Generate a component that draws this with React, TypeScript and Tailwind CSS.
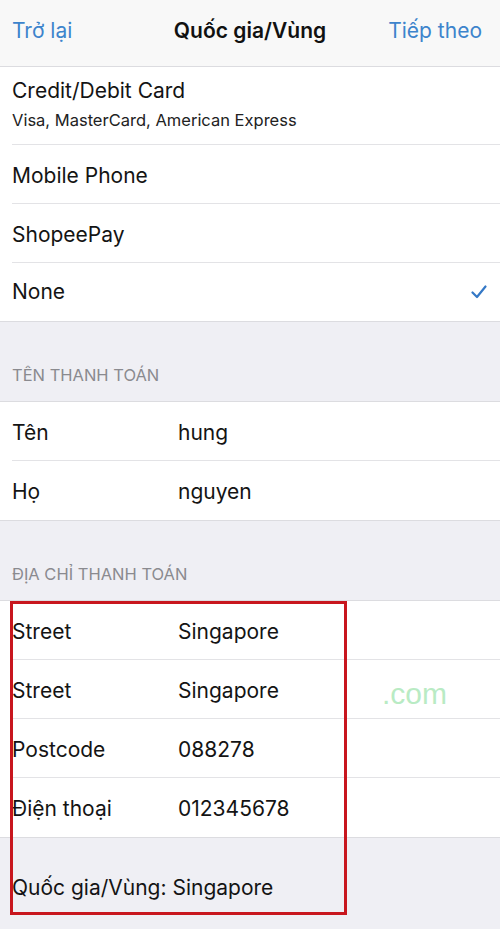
const font = { fontFamily: 'Inter, "Liberation Sans", sans-serif' };

const Row = ({ label, value, inset = true }: { label: string; value?: string; inset?: boolean }) => (
  <div className="relative flex h-[59px] items-center bg-white pl-3 pt-[2px] text-[21px] text-[#141414]">
    <span className="w-[166px] shrink-0">{label}</span>
    {value && <span>{value}</span>}
    {inset && <div className="absolute bottom-0 left-3 right-0 h-px bg-[#e3e3e6]" />}
  </div>
);

const SectionHeader = ({ title }: { title: string }) => (
  <div className="flex h-[81px] items-end border-y border-[#dcdce0] bg-[#efeff4] pb-[13px] pl-3 text-[16.5px] uppercase text-[#8a8a8f]">
    {title}
  </div>
);

export default function App() {
  return (
    <div className="min-h-[929px] w-[500px] bg-[#efeff4]" style={font}>
      <header className="grid h-[67px] grid-cols-3 items-center border-b border-[#dcdce0] bg-[#f8f8f8] px-3 pb-[4px] text-[21px]">
        <span className="text-[#3d84cc]">Trở lại</span>
        <span className="whitespace-nowrap text-center font-semibold text-[#111]">Quốc gia/Vùng</span>
        <span className="whitespace-nowrap pr-[6px] text-right text-[#3d84cc]">Tiếp theo</span>
      </header>

      <div className="bg-white">
        <div className="relative flex h-[78px] flex-col justify-center pl-3 pb-[4px]">
          <span className="text-[21px] leading-[32px] text-[#141414]">Credit/Debit Card</span>
          <span className="text-[16.5px] leading-[26px] text-[#222]">Visa, MasterCard, American Express</span>
          <div className="absolute bottom-0 left-3 right-0 h-px bg-[#e3e3e6]" />
        </div>
        <Row label="Mobile Phone" />
        <Row label="ShopeePay" />
        <div className="flex h-[58px] items-center justify-between bg-white pl-3 pr-[13px] text-[21px] text-[#141414]">
          <span>None</span>
          <svg width="16" height="14" viewBox="0 0 16 14" fill="none">
            <path d="M1.5 7.5L6 12L14.5 1.5" stroke="#3478c6" strokeWidth="2.2" strokeLinecap="round" strokeLinejoin="round" />
          </svg>
        </div>
      </div>

      <SectionHeader title="Tên thanh toán" />
      <Row label="Tên" value="hung" />
      <Row label="Họ" value="nguyen" inset={false} />

      <SectionHeader title="Địa chỉ thanh toán" />
      <div className="relative">
        <Row label="Street" value="Singapore" />
        <Row label="Street" value="Singapore" />
        <Row label="Postcode" value="088278" />
        <Row label="Điện thoại" value="012345678" inset={false} />
        <div className="flex h-[78px] items-end border-t border-[#dcdce0] pb-[12px] pl-3 text-[21px] text-[#141414]">
          Quốc gia/Vùng: Singapore
        </div>
        <span
          className="absolute left-[382px] top-[70px] text-[30px] text-[#b9ebc4]"
          style={{ fontFamily: '"Liberation Sans Narrow", "Liberation Sans", sans-serif' }}
        >
          .com
        </span>
        <div className="pointer-events-none absolute left-[10px] top-0 h-[314px] w-[337px] border-[3px] border-[#c8161e]" />
      </div>
    </div>
  );
}
